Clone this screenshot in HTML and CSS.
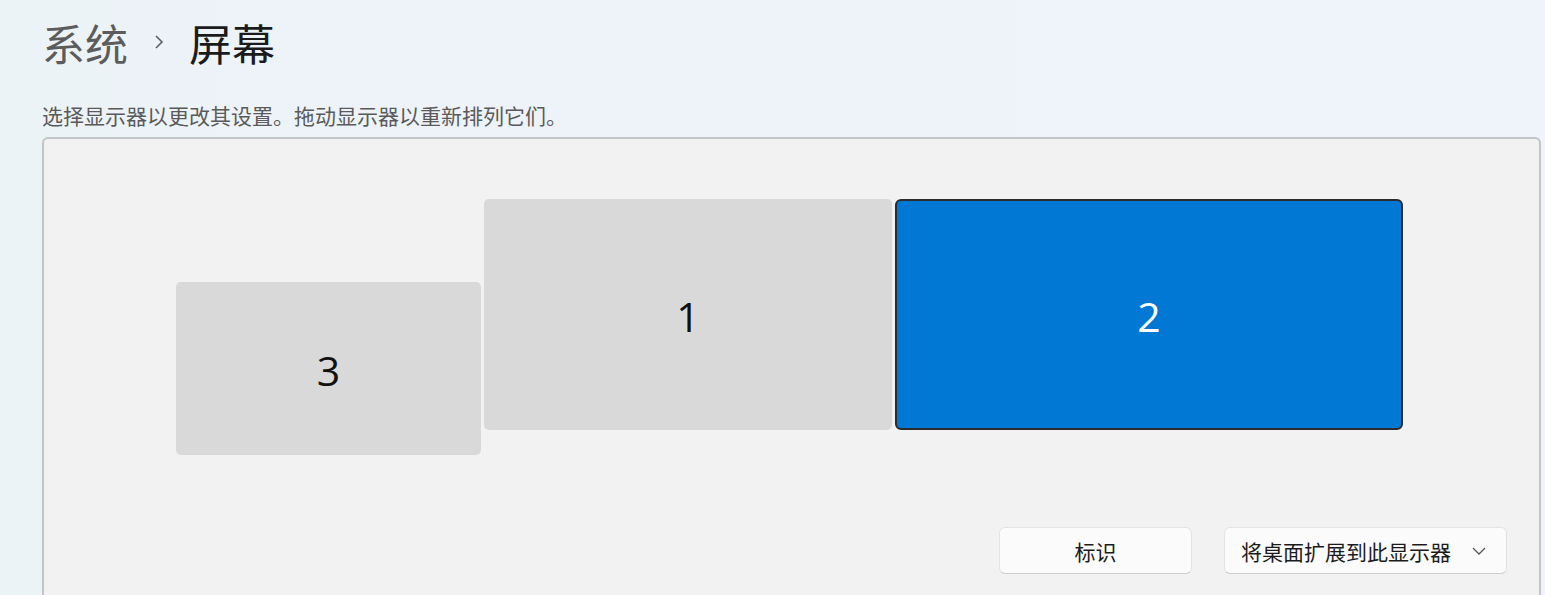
FILE: index.html
```html
<!DOCTYPE html>
<html lang="zh-CN">
<head>
<meta charset="utf-8">
<title>屏幕</title>
<link rel="stylesheet" href="styles.css">
</head>
<body>
<div class="page">
  <h1 class="title">
    <span class="crumb">系统</span>
    <svg class="sep" width="12" height="16" viewBox="0 0 12 16"><path d="M3 2 L9 8 L3 14" fill="none" stroke="#5f5f5f" stroke-width="1.6"/></svg>
    <span class="current">屏幕</span>
  </h1>
  <p class="hint">选择显示器以更改其设置。拖动显示器以重新排列它们。</p>
  <section class="panel">
    <div class="canvas">
      <div class="monitor m3"><span>3</span></div>
      <div class="monitor m1"><span>1</span></div>
      <div class="monitor m2 selected"><span>2</span></div>
    </div>
    <div class="actions">
      <button class="btn identify">标识</button>
      <button class="btn select">将桌面扩展到此显示器<svg class="chev" width="14" height="8" viewBox="0 0 14 8"><path d="M1 1 L7 7 L13 1" fill="none" stroke="#555" stroke-width="1.3"/></svg></button>
    </div>
  </section>
</div>
</body>
</html>
```

FILE: styles.css
```css
* { box-sizing: border-box; }
html, body { margin: 0; padding: 0; }
body {
  width: 1545px;
  height: 595px;
  overflow: hidden;
  background: linear-gradient(90deg, #ecf3f7 0%, #eef3f9 50%, #eff3fa 100%);
  font-family: "Noto Sans CJK SC", "Noto Sans", sans-serif;
}
.page {
  padding: 13px 0 0 42px;
}
.title {
  margin: 0;
  display: flex;
  align-items: center;
  font-size: 43px;
  font-weight: 400;
  line-height: 58px;
  height: 58px;
}
.crumb { color: #5c5c5c; }
.sep { margin: 0 24px 0 25px; }
.current { color: #1b1b1b; }
.hint {
  margin: 30px 0 0 0;
  font-size: 21px;
  line-height: 28px;
  color: #5a5a5a;
}
.panel {
  margin-top: 8px;
  width: 1499px;
  height: 470px;
  background: #f2f2f2;
  border: 2px solid #c2c4c7;
  border-bottom: none;
  border-radius: 6px 6px 0 0;
  display: flex;
  flex-direction: column;
}
.canvas {
  position: relative;
  height: 388px;
}
.monitor {
  position: absolute;
  background: #d9d9d9;
  border-radius: 5px;
  display: flex;
  align-items: center;
  justify-content: center;
  font-family: "Open Sans", "Noto Sans", sans-serif;
  font-size: 41px;
  color: #111;
}
.monitor span { margin-top: 2px; }
.m3 { left: 132px; top: 143px; width: 305px; height: 173px; }
.m1 { left: 440px; top: 60px; width: 408px; height: 231px; }
.m2 { left: 851px; top: 60px; width: 508px; height: 231px; border-radius: 6px; }
.selected {
  background: #0078d4;
  border: 2px solid #2b2b2b;
  color: #fff;
}
.actions {
  display: flex;
  justify-content: flex-end;
  gap: 32px;
  padding-right: 32px;
}
.btn {
  height: 47px;
  background: #fbfbfb;
  border: 1px solid #e3e3e3;
  border-bottom-color: #cfcfcf;
  border-radius: 6px;
  font-family: "Noto Sans CJK SC", "Noto Sans", sans-serif;
  font-size: 21px;
  color: #1b1b1b;
  display: flex;
  align-items: center;
  justify-content: center;
  padding: 0;
}
.identify { width: 193px; }
.select {
  width: 283px;
  justify-content: flex-start;
  padding-left: 16px;
}
.chev { margin-left: 21px; }
```
